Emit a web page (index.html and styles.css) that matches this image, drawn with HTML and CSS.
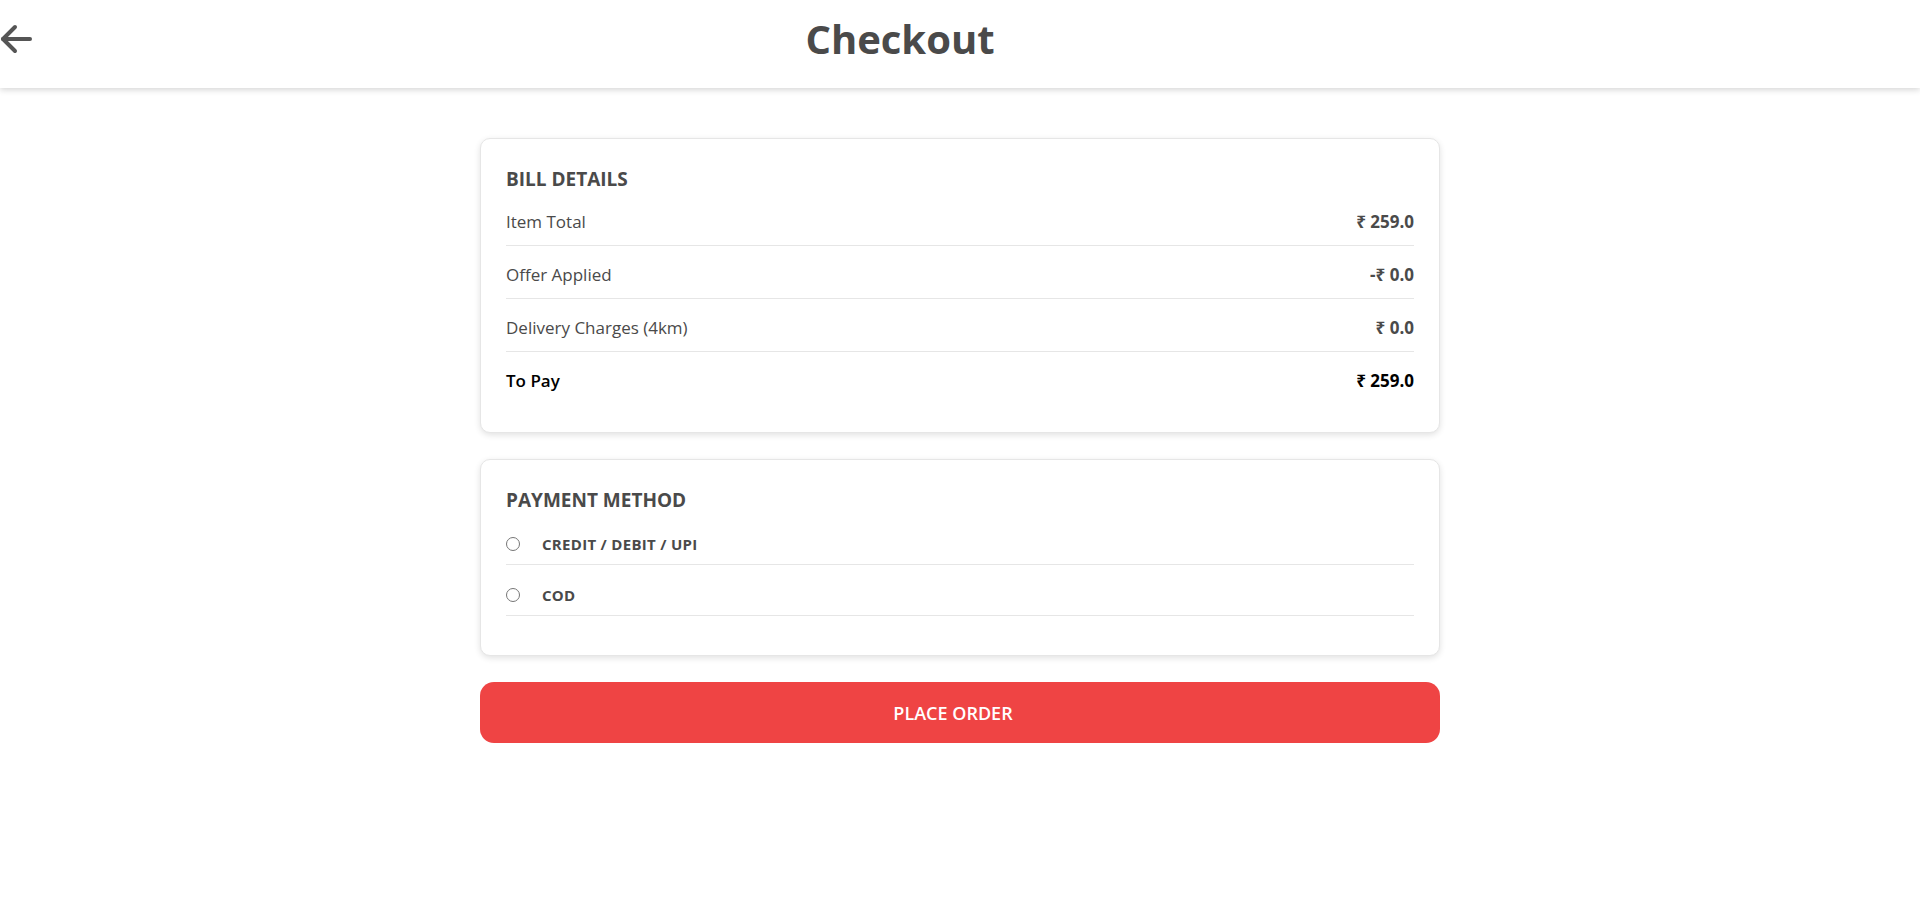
FILE: index.html
```html
<!DOCTYPE html>
<html lang="en">
<head>
<meta charset="utf-8">
<title>Checkout</title>
<link rel="stylesheet" href="styles.css">
</head>
<body>
<header class="topbar">
  <button class="back" aria-label="Back">
    <svg width="32" height="30" viewBox="0 0 32 30" fill="none" stroke="#555555" stroke-width="4" stroke-linecap="round" stroke-linejoin="round">
      <path d="M30 15H3"/>
      <path d="M15 3L3 15L15 27"/>
    </svg>
  </button>
  <h1 class="title">Checkout</h1>
</header>

<main class="content">
  <section class="card">
    <h2 class="card-title">BILL DETAILS</h2>
    <div class="bill-row"><span>Item Total</span><span class="amount">₹ 259.0</span></div>
    <div class="bill-row"><span>Offer Applied</span><span class="amount">-₹ 0.0</span></div>
    <div class="bill-row"><span>Delivery Charges (4km)</span><span class="amount">₹ 0.0</span></div>
    <div class="bill-row total"><span>To Pay</span><span class="amount">₹ 259.0</span></div>
  </section>

  <section class="card card-pay">
    <h2 class="card-title">PAYMENT METHOD</h2>
    <label class="pay-row"><input type="radio" name="pay" class="radio"><span>CREDIT / DEBIT / UPI</span></label>
    <label class="pay-row"><input type="radio" name="pay" class="radio"><span>COD</span></label>
  </section>

  <button class="place-order">PLACE ORDER</button>
</main>
</body>
</html>
```

FILE: styles.css
```css
* { box-sizing: border-box; }

html, body {
  margin: 0;
  padding: 0;
  background: #ffffff;
  font-family: "Open Sans", "Noto Sans", "Liberation Sans", sans-serif;
  color: #4a4a4a;
}

.topbar {
  height: 88px;
  display: flex;
  align-items: center;
  padding-bottom: 10px;
  background: #ffffff;
  box-shadow: 0 2px 6px rgba(0, 0, 0, 0.16);
}

.back {
  width: 32px;
  height: 30px;
  padding: 0;
  border: 0;
  background: none;
  display: flex;
  align-items: center;
  cursor: pointer;
}

.title {
  flex: 1;
  margin: 0;
  padding-right: 152px;
  text-align: center;
  font-size: 40px;
  font-weight: 700;
  line-height: 52px;
  color: #4a4a4a;
}

.content {
  width: 960px;
  margin: 50px auto 0;
  display: flex;
  flex-direction: column;
  gap: 26px;
}

.card {
  border: 1px solid #e6e6e6;
  border-radius: 10px;
  background: #ffffff;
  box-shadow: 0 2px 6px rgba(0, 0, 0, 0.12);
  padding: 26px 25px 28px;
  display: flex;
  flex-direction: column;
}

.card-title {
  margin: 0;
  font-size: 19px;
  font-weight: 700;
  line-height: 28px;
  color: #4a4a4a;
}

.bill-row {
  display: flex;
  justify-content: space-between;
  align-items: center;
  padding: 16px 0 11px;
  line-height: 25px;
  font-size: 17px;
  border-bottom: 1px solid #e6e6e6;
}

.bill-row .amount {
  font-weight: 700;
}

.bill-row.total {
  border-bottom: 0;
  color: #000000;
  font-weight: 600;
}

.card-pay {
  padding-bottom: 39px;
}

.pay-row {
  display: flex;
  align-items: center;
  gap: 22px;
  padding: 20px 0 10px;
  line-height: 20px;
  font-size: 15px;
  font-weight: 700;
  letter-spacing: 0.3px;
  border-bottom: 1px solid #e6e6e6;
  cursor: pointer;
}

.radio {
  width: 14px;
  height: 14px;
  margin: 0;
}

.place-order {
  height: 61px;
  padding: 0 14px 0 0;
  border: 0;
  border-radius: 14px;
  background: #ef4444;
  color: #ffffff;
  font-family: inherit;
  font-size: 18px;
  font-weight: 600;
  cursor: pointer;
}
```
